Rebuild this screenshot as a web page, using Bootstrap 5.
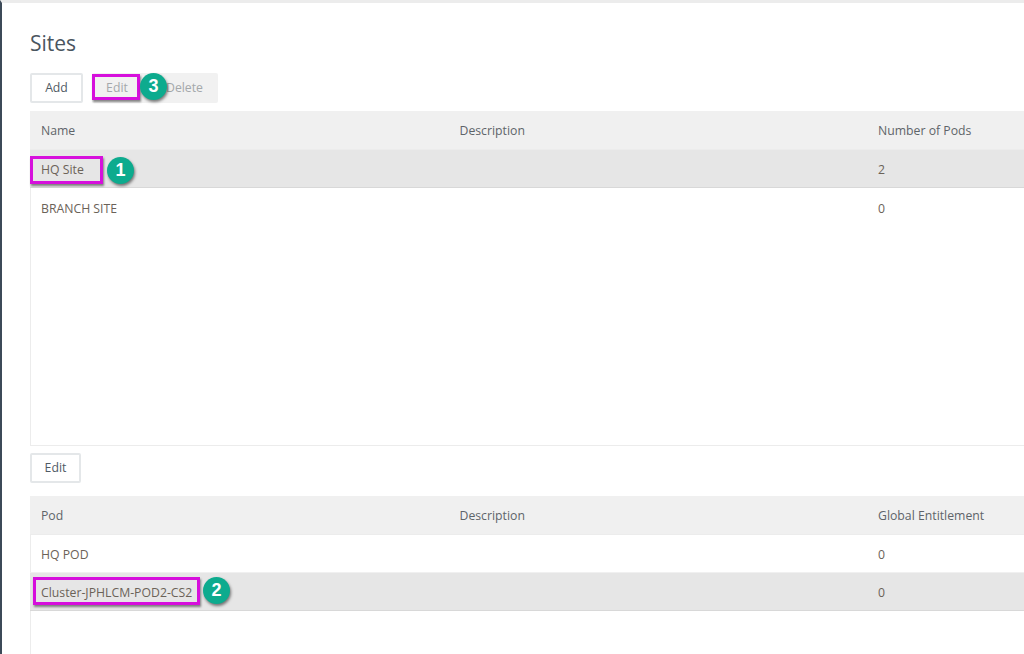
<!DOCTYPE html>
<html lang="en">
<head>
<meta charset="utf-8">
<title>Sites</title>
<link href="https://cdn.jsdelivr.net/npm/bootstrap@5.3.0/dist/css/bootstrap.min.css" rel="stylesheet">
<style>
html,body{height:100%;overflow:hidden}
body{font-family:"Open Sans","Noto Sans",sans-serif;font-size:12.25px;color:#5a5a5a;background:#fff}
.shell{height:654px;border-left:2px solid #3c4a58;border-top:3px solid #ececec;padding:0 0 0 28px;position:relative;overflow:hidden}
.page-title{font-size:21px;line-height:27px;font-weight:400;color:#4a5560;margin:27px 0 16px}
.act{font-size:12.25px;line-height:16px;height:30px;padding:0;border-radius:2px;color:#4f5a64}
.act-on{width:53px;background:#fff;border:2px solid #e4e7e9}
.act-on:hover{background:#fff}
.act-group{height:30px;width:126px;background:#f1f1f1;border-radius:2px;margin-left:9px;color:#a4a8ab}
.act-off-a{width:50px;text-align:center}
.act-off-b{width:74px;padding-left:24px}
.grid-box{width:1254px;border-left:1px solid #ececec;border-bottom:1px solid #ececec}
.grid-top{height:335px;margin-top:8px}
.grid-bot{height:200px;margin-top:13px}
.grid-line{display:grid;grid-template-columns:418.5px 418.5px 418px;height:38px;align-items:center;border-bottom:1px solid #f0f0f0;margin-left:-1px;padding:4px 0 0 11px;color:#6b6258}
.grid-line>span{display:block}
.grid-head{height:39px;background:#f0f0f0;color:#5e6469;border-bottom:1px solid #ececec;padding-top:3px}
.grid-sel{background:#e6e6e6;border-bottom:1px solid #d8d8d8}
.grid-plain{border-bottom:0}
.edit-btn{width:51px;margin-top:7px;display:block}
.callout{position:absolute;border:3px solid #d60fdc;box-shadow:1px 2px 2px rgba(0,0,0,.45);pointer-events:none}
.num{position:absolute;width:27px;height:27px;border-radius:50%;background:#0dab8e;color:#fff;font:700 18px/27px "Liberation Sans",sans-serif;text-align:center;box-shadow:1px 2px 3px rgba(0,0,0,.5)}
.c1{left:28px;top:153px;width:73px;height:28px}
.c2{left:31px;top:574px;width:167px;height:28px}
.c3{left:90px;top:71px;width:48px;height:26px}
.n1{left:105px;top:154px}
.n2{left:201px;top:574px}
.n3{left:138px;top:70px}
</style>
</head>
<body>
<div class="shell">
  <h1 class="page-title">Sites</h1>
  <div class="d-flex align-items-center">
    <button type="button" class="btn act act-on">Add</button>
    <div class="act-group d-flex align-items-center">
      <span class="act-off-a">Edit</span>
      <span class="act-off-b">Delete</span>
    </div>
  </div>
  <div class="grid-box grid-top">
    <div class="grid-line grid-head"><span>Name</span><span>Description</span><span>Number of Pods</span></div>
    <div class="grid-line grid-sel"><span>HQ Site</span><span></span><span>2</span></div>
    <div class="grid-line grid-plain"><span>BRANCH SITE</span><span></span><span>0</span></div>
  </div>
  <button type="button" class="btn act act-on edit-btn">Edit</button>
  <div class="grid-box grid-bot">
    <div class="grid-line grid-head"><span>Pod</span><span>Description</span><span>Global Entitlement</span></div>
    <div class="grid-line"><span>HQ POD</span><span></span><span>0</span></div>
    <div class="grid-line grid-sel"><span>Cluster-JPHLCM-POD2-CS2</span><span></span><span>0</span></div>
  </div>
  <div class="callout c1"></div><div class="num n1">1</div>
  <div class="callout c2"></div><div class="num n2">2</div>
  <div class="callout c3"></div><div class="num n3">3</div>
</div>
</body>
</html>
